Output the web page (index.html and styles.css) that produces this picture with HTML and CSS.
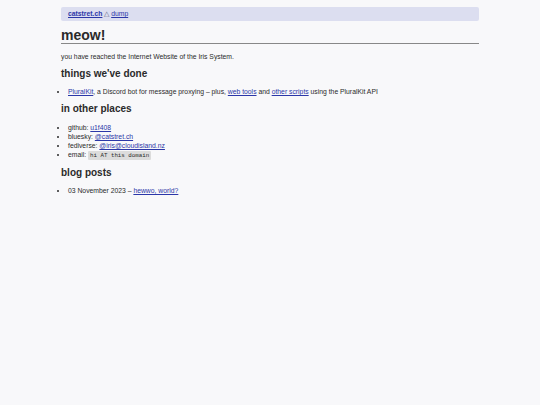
FILE: index.html
```html
<!DOCTYPE html>
<html lang="en">
<head>
    <meta charset="UTF-8">
    <meta name="viewport" content="width=device-width, initial-scale=1.0">
    <title>catstret.ch</title>
    <link rel="stylesheet" href="styles.css">
</head>
<body>
    <div class="container">
        <nav class="nav">
            <a href="#" class="site-name">catstret.ch</a>
            <span class="sep">&#9651;</span>
            <a href="#">dump</a>
        </nav>

        <h1>meow!</h1>
        <p>you have reached the Internet Website of the Iris System.</p>

        <h2>things we've done</h2>
        <ul>
            <li><a href="#">PluralKit</a>, a Discord bot for message proxying &ndash; plus, <a href="#">web tools</a> and <a href="#">other scripts</a> using the PluralKit API</li>
        </ul>

        <h2>in other places</h2>
        <ul>
            <li>github: <a href="#">u1f408</a></li>
            <li>bluesky: <a href="#">@catstret.ch</a></li>
            <li>fediverse: <a href="#">@iris@cloudisland.nz</a></li>
            <li>email: <code>hi AT this domain</code></li>
        </ul>

        <h2>blog posts</h2>
        <ul>
            <li>03 November 2023 &ndash; <a href="#">hewwo, world?</a></li>
        </ul>
    </div>
</body>
</html>
```

FILE: styles.css
```css
body {
    margin: 0;
    padding: 0;
    font-family: 'Liberation Sans', Arial, sans-serif;
    font-size: 6.8px;
    line-height: 9px;
    color: #2a2a2a;
    background-color: #f8f8fa;
}

.container {
    width: 418px;
    margin: 0 auto;
    padding-top: 7px;
}

a {
    color: #2b37a8;
}

.nav {
    background: #dcdef0;
    border-radius: 2px;
    padding: 2px 7px;
    height: 10px;
    line-height: 10px;
}

.nav .site-name {
    font-weight: bold;
}

.sep {
    font-size: 7px;
    color: #5a5f80;
}

h1 {
    font-size: 14px;
    line-height: 15px;
    margin: 7px 0 0;
    padding-bottom: 0;
    border-bottom: 1px solid #888;
}

h2 {
    font-size: 10px;
    line-height: 12px;
    margin: 7px 0 7.5px;
}

p {
    margin: 7.5px 0 0;
}

ul {
    margin: 0;
    padding-left: 7px;
}

code {
    font-family: 'Liberation Mono', monospace;
    font-size: 5.8px;
    background: #dcdcdc;
    padding: 1px 2px;
    border-radius: 1px;
}
```
